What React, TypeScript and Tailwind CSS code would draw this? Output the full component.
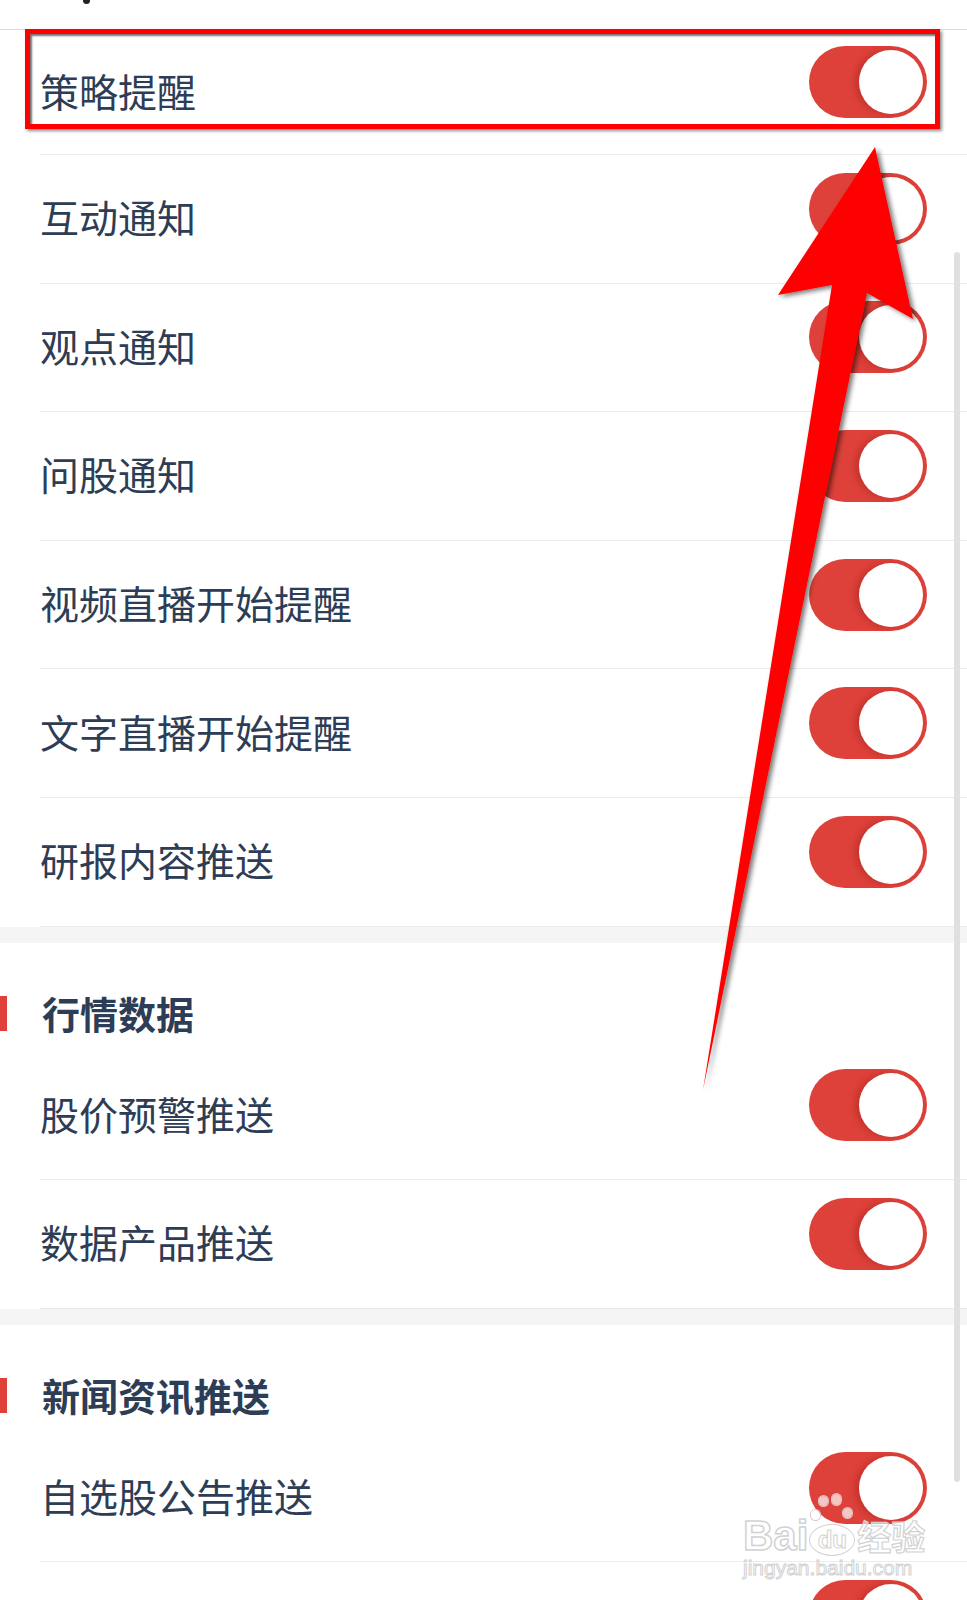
import type { ReactNode } from 'react'

const font = '[font-family:"Noto_Sans_CJK_SC","Noto_Sans",sans-serif]'

function Toggle() {
    return (
        <div className="mb-[20px] flex h-[72px] w-[118px] shrink-0 items-center justify-end rounded-full bg-[#dd4139] pr-[4px]">
            <div className="h-[64px] w-[64px] rounded-full bg-white shadow-[-4px_0_6px_rgba(110,0,0,0.22)]" />
        </div>
    )
}

interface RowProps {
    label?: string
    height?: string
}

function Row({ label, height = 'h-[128.6px]' }: RowProps) {
    return (
        <div className={`ml-[40px] flex ${height} items-center justify-between border-b border-[#ebebeb] pr-[40px]`}>
            <span className="mb-[4px] text-[39px] leading-[39px] text-[#2d3d55]">{label}</span>
            <Toggle />
        </div>
    )
}

function SectionTitle({ children }: { children: ReactNode }) {
    return (
        <div className="h-[109px] pt-[52px]">
            <div className="flex h-[38px] items-center">
                <div className="h-[35px] w-[7px] bg-[#e0403a]" />
                <span className="mb-[2px] ml-[35px] text-[38px] font-bold leading-[38px] text-[#2d3d55]">{children}</span>
            </div>
        </div>
    )
}

function Gap() {
    return <div className="h-[16px] bg-[#f5f5f5]" />
}

function Arrow() {
    return (
        <svg className="pointer-events-none absolute left-0 top-0" width="967" height="1600" viewBox="0 0 967 1600">
            <defs>
                <filter id="arrowShadow" x="-20%" y="-5%" width="140%" height="110%">
                    <feDropShadow dx="3" dy="2" stdDeviation="2.5" floodColor="#000" floodOpacity="0.55" />
                </filter>
            </defs>
            <polygon
                points="875,147 913,319 867,293 703,1090 832,285 778,295"
                fill="#ff0000"
                filter="url(#arrowShadow)"
            />
        </svg>
    )
}

function Watermark() {
    return (
        <div className="pointer-events-none absolute left-[743px] top-[1516px] flex flex-col items-start">
            <div className="relative flex items-end">
                <span className="text-[42px] font-bold leading-[40px] text-white/60 [-webkit-text-stroke:1.5px_#d2d2d2] [font-family:'Liberation_Sans',sans-serif]">
                    Bai
                </span>
                <span className="relative ml-[1px] flex h-[36px] w-[46px] items-end justify-center">
                    <span className="absolute left-[10px] top-[-24px] h-[10px] w-[9px] rounded-full bg-white/70 [box-shadow:0_0_0_1px_#e2c6c6]" />
                    <span className="absolute left-[23px] top-[-26px] h-[11px] w-[9px] rounded-full bg-white/70 [box-shadow:0_0_0_1px_#e2c6c6]" />
                    <span className="absolute left-[34px] top-[-12px] h-[10px] w-[9px] rounded-full bg-white/70 [box-shadow:0_0_0_1px_#e2c6c6]" />
                    <span className="absolute left-[2px] top-[-10px] h-[10px] w-[9px] rounded-full bg-white/70 [box-shadow:0_0_0_1px_#e2c6c6]" />
                    <span className="flex h-[32px] w-[46px] items-center justify-center rounded-[50%] border-[1.5px] border-[#d2d2d2] bg-white/50 text-[24px] font-bold leading-[24px] text-white/60 [-webkit-text-stroke:1px_#d2d2d2] [font-family:'Liberation_Sans',sans-serif]">
                        du
                    </span>
                </span>
                <span className="ml-[2px] text-[34px] font-bold leading-[40px] text-white/60 [-webkit-text-stroke:1.2px_#d2d2d2]">
                    经验
                </span>
            </div>
            <span className="mt-[1px] text-[21px] leading-[21px] text-white/60 [-webkit-text-stroke:1px_#d2d2d2] [font-family:'Liberation_Sans',sans-serif]">
                jingyan.baidu.com
            </span>
        </div>
    )
}

export default function App() {
    return (
        <div className={`relative h-[1600px] w-[967px] overflow-hidden bg-white ${font}`}>
            <div className="relative h-[30px] border-b border-[#dadada]">
                <div className="absolute left-[83px] top-0 h-[4px] w-[7px] rounded-b-full bg-[#222]" />
            </div>

            <Row label="策略提醒" height="h-[125px]" />
            <Row label="互动通知" />
            <Row label="观点通知" />
            <Row label="问股通知" />
            <Row label="视频直播开始提醒" />
            <Row label="文字直播开始提醒" />
            <Row label="研报内容推送" />
            <Gap />

            <SectionTitle>行情数据</SectionTitle>
            <Row label="股价预警推送" />
            <Row label="数据产品推送" />
            <Gap />

            <SectionTitle>新闻资讯推送</SectionTitle>
            <Row label="自选股公告推送" />
            <Row />

            {/* scrollbar */}
            <div className="absolute left-[954px] top-[252px] h-[1230px] w-[6px] rounded-full bg-[#e0e0e0]" />

            {/* annotation box */}
            <div className="pointer-events-none absolute left-[25px] top-[29px] h-[100px] w-[915px] border-[5px] border-[#ff0000] shadow-[2px_2px_3px_rgba(0,0,0,0.45),inset_2px_2px_2px_rgba(0,0,0,0.55)]" />

            <Arrow />
            <Watermark />
        </div>
    )
}
